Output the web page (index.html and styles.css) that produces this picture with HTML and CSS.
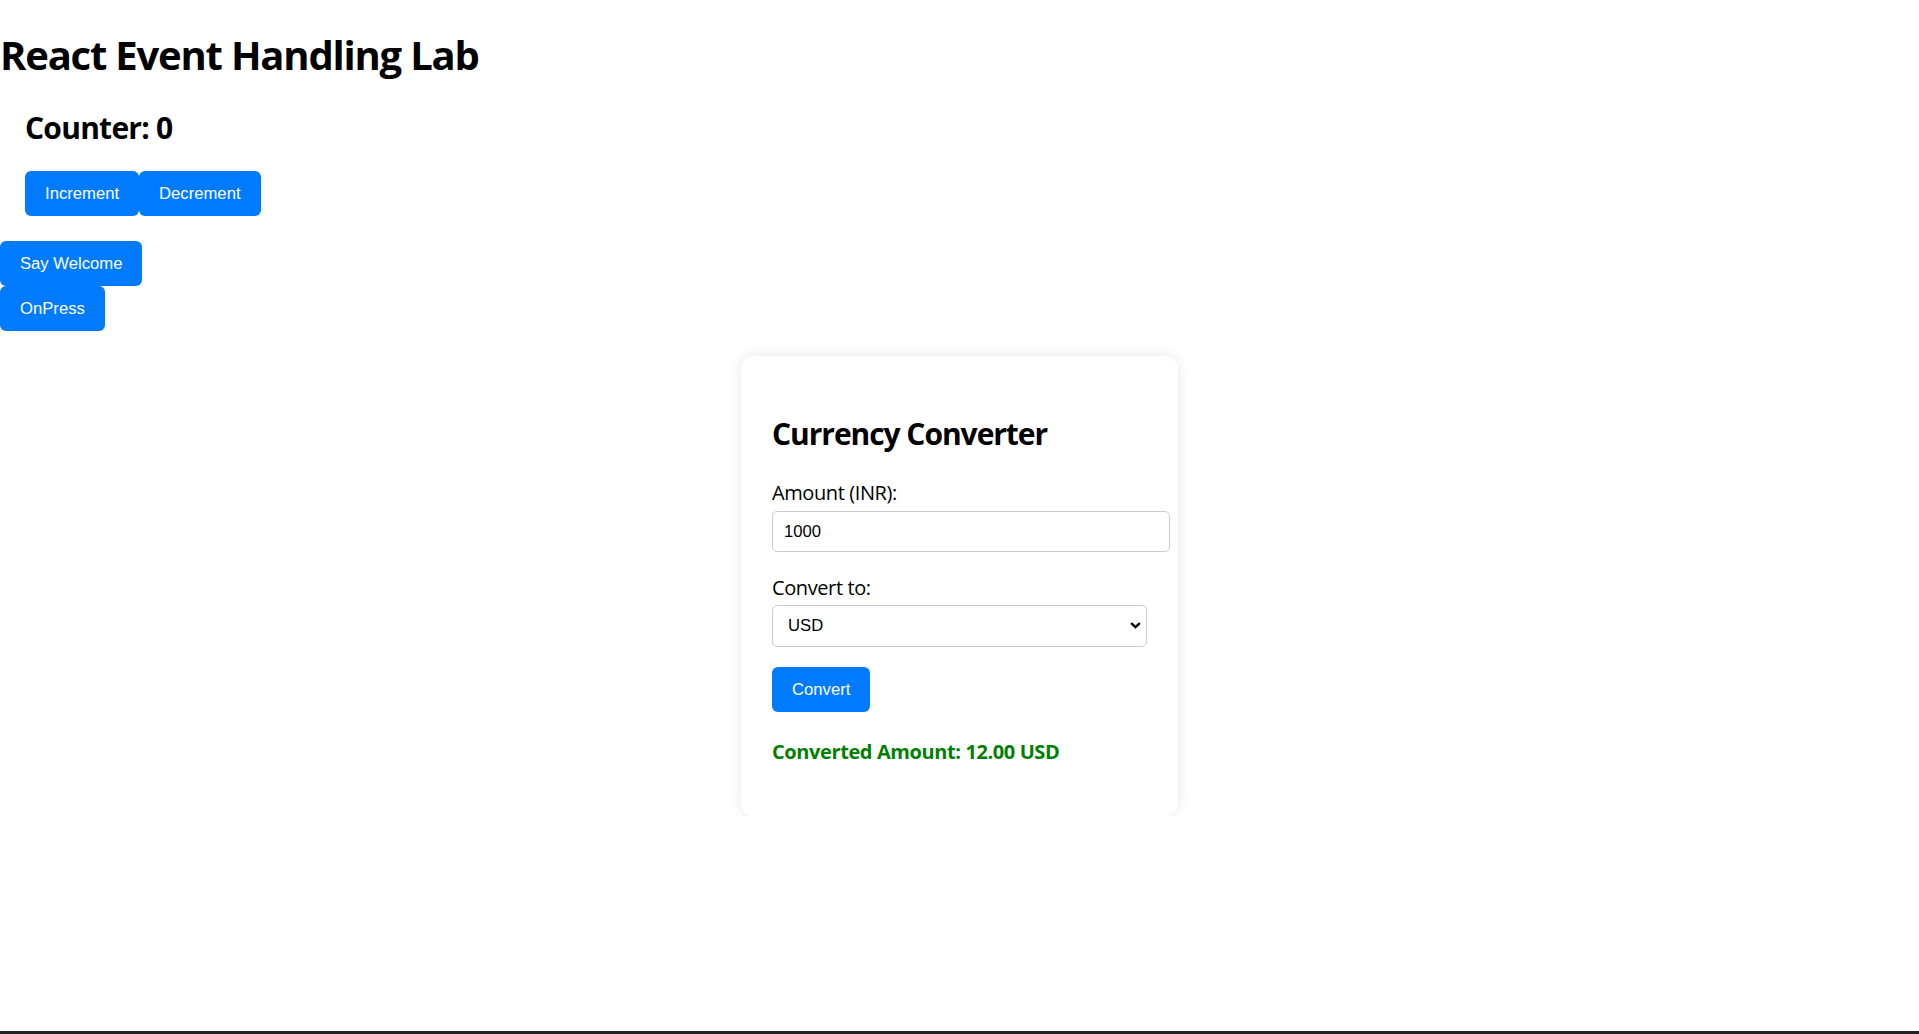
FILE: index.html
```html
<!DOCTYPE html>
<html lang="en">
<head>
<meta charset="utf-8">
<title>React Event Handling Lab</title>
<link rel="stylesheet" href="styles.css">
</head>
<body>
<div class="app">
  <h1 class="title">React Event Handling Lab</h1>
  <div class="counter">
    <h2 class="counter-title">Counter: 0</h2>
    <div class="btn-row"><button class="btn">Increment</button><button class="btn">Decrement</button></div>
  </div>
  <button class="btn btn-block">Say Welcome</button>
  <button class="btn btn-block">OnPress</button>

  <div class="card">
    <h2 class="card-title">Currency Converter</h2>
    <div class="field">
      <label class="label" for="amount">Amount (INR):</label>
      <input class="input" id="amount" type="number" value="1000">
    </div>
    <div class="field field-select">
      <label class="label" for="cur">Convert to:</label>
      <div class="select-wrap">
        <select class="select" id="cur">
          <option>USD</option>
          <option>EUR</option>
        </select>
        <svg class="chevron" width="11" height="7" viewBox="0 0 11 7"><path d="M1.2 1.2 L5.5 5.2 L9.8 1.2" fill="none" stroke="#000" stroke-width="2.4"/></svg>
      </div>
    </div>
    <button class="btn">Convert</button>
    <p class="result">Converted Amount: 12.00 USD</p>
  </div>
</div>
<div class="edge"></div>
</body>
</html>
```
FILE: styles.css
```css
html, body {
  margin: 0;
  padding: 0;
  background: #ffffff;
}
body {
  font-family: "Open Sans", "Noto Sans", sans-serif;
  color: #000;
}
.title {
  font-size: 40px;
  font-weight: 700;
  line-height: 53px;
  margin: 26.8px 0 25.8px;
  padding-top: 1px;
  letter-spacing: -1.2px;
}
.counter {
  padding: 0 25px 25px;
}
.counter-title {
  font-size: 30px;
  font-weight: 700;
  line-height: 40px;
  margin: 25px 0 23.5px;
  padding-top: 1px;
  letter-spacing: -0.75px;
}
.card-title {
  font-size: 30px;
  font-weight: 700;
  line-height: 40px;
  margin: 25px 0 23px;
  padding-top: 2px;
  letter-spacing: -1.05px;
}
.btn-row {
  display: flex;
}
.btn {
  background: #007bff;
  color: #ffffff;
  border: none;
  border-radius: 6px;
  padding: 13px 20px;
  font-family: "Liberation Sans", Arial, sans-serif;
  font-size: 16.67px;
  line-height: 19px;
  cursor: pointer;
}
.btn-block {
  display: block;
}
.card {
  width: 375px;
  padding: 31.25px;
  margin: 25px auto 0;
  border-radius: 12.5px;
  background: #fff;
  box-shadow: 0 0 12.5px rgba(0, 0, 0, 0.1);
}
.field {
  margin-bottom: 20px;
}
.field-select {
  margin-bottom: 20px;
}
.label {
  display: block;
  font-size: 20px;
  line-height: 27px;
  padding-top: 2px;
  margin-bottom: 4.25px;
  letter-spacing: -0.4px;
}
.input {
  display: block;
  width: 100%;
  padding: 10px 10px 10px 11px;
  border: 1px solid #cccccc;
  border-radius: 5px;
  font-family: "Liberation Sans", Arial, sans-serif;
  font-size: 16.67px;
  line-height: 19px;
  color: #000;
  -moz-appearance: textfield;
  appearance: textfield;
  outline: none;
}
.input::-webkit-inner-spin-button,
.input::-webkit-outer-spin-button {
  -webkit-appearance: none;
  margin: 0;
}
.select-wrap {
  position: relative;
}
.select {
  display: block;
  width: 100%;
  box-sizing: border-box;
  height: 42px;
  padding: 0 30px 0 15px;
  border: 1px solid #cccccc;
  border-radius: 5px;
  background: #fff;
  font-family: "Liberation Sans", Arial, sans-serif;
  font-size: 16.67px;
  color: #000;
  -webkit-appearance: none;
  appearance: none;
  outline: none;
}
.chevron {
  position: absolute;
  right: 6px;
  top: 17px;
  pointer-events: none;
}
.result {
  margin: 26px 0 20px;
  font-size: 20px;
  line-height: 27px;
  font-weight: 700;
  color: #008000;
  letter-spacing: -0.4px;
}
.edge {
  position: fixed;
  left: 0;
  right: 0;
  bottom: 0;
  height: 3px;
  background: #222222;
}
```
